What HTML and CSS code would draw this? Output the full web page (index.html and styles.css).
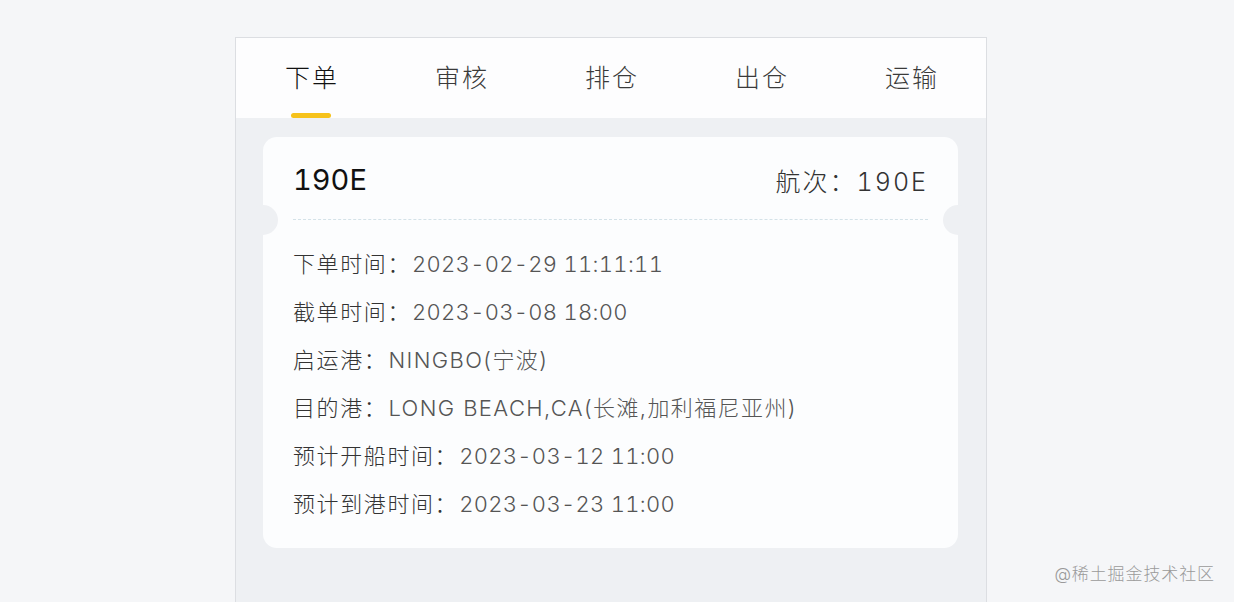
FILE: index.html
```html
<!DOCTYPE html>
<html lang="zh-CN">
<head>
<meta charset="utf-8">
<title>订单详情</title>
<link rel="stylesheet" href="styles.css">
</head>
<body>
<div class="panel">
  <nav class="tabs">
    <div class="tab active"><span class="tab-text">下单</span><span class="bar"></span></div>
    <div class="tab"><span class="tab-text">审核</span><span class="bar"></span></div>
    <div class="tab"><span class="tab-text">排仓</span><span class="bar"></span></div>
    <div class="tab"><span class="tab-text">出仓</span><span class="bar"></span></div>
    <div class="tab"><span class="tab-text">运输</span><span class="bar"></span></div>
  </nav>
  <div class="content">
    <div class="card">
      <div class="card-head">
        <span class="ship">190E</span>
        <span class="voyage">航次：<span class="num">190E</span></span>
      </div>
      <div class="card-body">
        <div class="row"><span class="label">下单时间：</span><span class="val num">2023-02-29 11:11:11</span></div>
        <div class="row"><span class="label">截单时间：</span><span class="val num">2023-03-08 18:00</span></div>
        <div class="row"><span class="label">启运港：</span><span class="val">NINGBO(宁波)</span></div>
        <div class="row"><span class="label">目的港：</span><span class="val">LONG BEACH,CA(长滩,加利福尼亚州)</span></div>
        <div class="row"><span class="label">预计开船时间：</span><span class="val num">2023-03-12 11:00</span></div>
        <div class="row"><span class="label">预计到港时间：</span><span class="val num">2023-03-23 11:00</span></div>
      </div>
    </div>
  </div>
</div>
<div class="watermark">@稀土掘金技术社区</div>
</body>
</html>
```
FILE: styles.css
```css
* { box-sizing: border-box; }
html, body { margin: 0; padding: 0; }
body {
  background: #f5f6f8;
  font-family: Inter, "Noto Sans CJK SC", sans-serif;
  font-weight: 300;
  width: 1234px;
  height: 602px;
  overflow: hidden;
  position: relative;
}
.panel {
  margin: 37px 0 0 235px;
  width: 752px;
  height: 565px;
  border: 1px solid #dcdee2;
  border-bottom: none;
  background: #eef0f3;
  display: flex;
  flex-direction: column;
}
.tabs {
  display: flex;
  background: #fdfdfe;
  height: 80px;
}
.tab {
  flex: 1;
  display: flex;
  flex-direction: column;
  align-items: center;
  padding-top: 22px;
}
.tab-text {
  font-size: 25px;
  line-height: 36px;
  letter-spacing: 2px;
  margin-right: -2px;
  color: #3a3a3a;
}
.tab.active .tab-text { color: #111; }
.bar {
  margin-top: 17px;
  width: 40px;
  height: 5px;
  border-radius: 3px;
  background: transparent;
}
.tab.active .bar { background: #f6c21b; }
.content {
  flex: 1;
  padding: 19px 28px 0 27px;
}
.card {
  background: #fcfdfe;
  border-radius: 14px;
  position: relative;
}
.card::before, .card::after {
  content: "";
  position: absolute;
  top: 68px;
  width: 30px;
  height: 30px;
  border-radius: 50%;
  background: #eef0f3;
}
.card::before { left: -15px; }
.card::after { right: -15px; }
.card-head {
  height: 83px;
  margin: 0 30px;
  padding-top: 3px;
  display: flex;
  align-items: center;
  justify-content: space-between;
  border-bottom: 1px dashed #d4e2e8;
}
.num { font-variant-numeric: tabular-nums; }
.ship {
  font-size: 29px;
  font-weight: 400;
  color: #111;
  letter-spacing: 0;
  font-variant-numeric: tabular-nums;
}
.voyage {
  font-size: 25px;
  color: #333;
  letter-spacing: 2px;
}
.card-body {
  padding: 20px 30px 20px;
}
.row {
  height: 48px;
  line-height: 48px;
  font-size: 22px;
  white-space: nowrap;
}
.label { color: #333; letter-spacing: 1.6px; }
.val { color: #555; letter-spacing: 1.4px; margin-left: 1px; }
.val.num { letter-spacing: 0.3px; }
.watermark {
  position: absolute;
  right: 19px;
  bottom: 17px;
  font-size: 17px;
  color: #9a9a9a;
  letter-spacing: 0.9px;
}
```
